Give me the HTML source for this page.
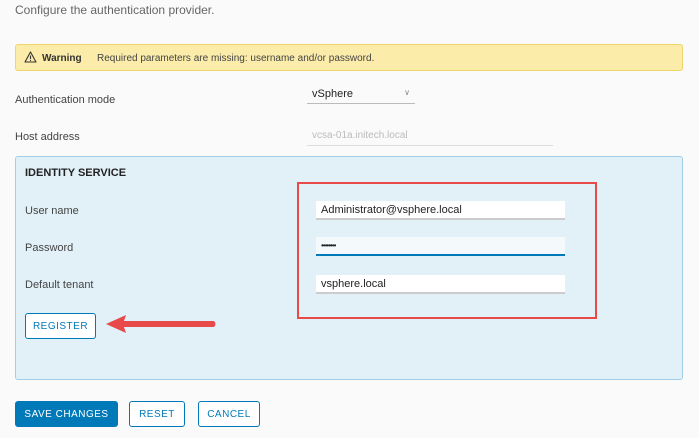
<!DOCTYPE html>
<html><head><style>
body{margin:0;width:699px;height:438px;background:#fafafa;font-family:"Liberation Sans",sans-serif;position:relative;overflow:hidden;color:#333}
.a{position:absolute}
.lbl{font-size:11px;color:#444}
.inp{position:absolute;background:#fff;border-bottom:2px solid #ccc;height:19px;font-size:11px;line-height:18px;padding-left:5px;box-sizing:border-box;color:#222}
.btn{position:absolute;box-sizing:border-box;border:1px solid #0079b8;border-radius:3px;font-size:10px;letter-spacing:.5px;color:#0079b8;background:#fff;text-align:center;line-height:25px;height:26px}
</style></head><body>
<div class="a" style="left:15px;top:3px;font-size:12px;color:#666">Configure the authentication provider.</div>
<div class="a" style="left:15px;top:44px;width:668px;height:27px;box-sizing:border-box;background:#fcecaa;border:1px solid #f0d56a;border-radius:3px"></div>
<svg class="a" style="left:24px;top:51px" width="13" height="12" viewBox="0 0 13 12"><path d="M6.5 1 L12 11 H1 Z" fill="none" stroke="#333" stroke-width="1.1" stroke-linejoin="round"/><path d="M6.5 4.5V8" stroke="#333" stroke-width="1.1"/><circle cx="6.5" cy="9.4" r=".6" fill="#333"/></svg>
<div class="a" style="left:42px;top:53px;font-size:10px;font-weight:bold;color:#333">Warning</div>
<div class="a" style="left:97px;top:53px;font-size:10px;color:#444">Required parameters are missing: username and/or password.</div>
<div class="a lbl" style="left:15px;top:94px">Authentication mode</div>
<div class="a" style="left:307px;top:88px;width:108px;height:16px;border-bottom:1px solid #bbb;font-size:11px;padding-left:5px;box-sizing:border-box;color:#222">vSphere<span style="position:absolute;right:5px;top:0;font-size:8px;color:#888">&#8744;</span></div>
<div class="a lbl" style="left:15px;top:131px">Host address</div>
<div class="a" style="left:307px;top:130px;width:246px;height:16px;border-bottom:1px solid #ddd;font-size:10px;padding-left:5px;box-sizing:border-box;color:#bbb">vcsa-01a.initech.local</div>
<div class="a" style="left:15px;top:156px;width:668px;height:224px;box-sizing:border-box;background:#e2f1f8;border:1px solid #9fd0e8;border-radius:3px"></div>
<div class="a" style="left:25px;top:167px;font-size:11px;font-weight:bold;color:#222">IDENTITY SERVICE</div>
<div class="a lbl" style="left:25px;top:205px">User name</div>
<div class="a lbl" style="left:25px;top:242px">Password</div>
<div class="a lbl" style="left:25px;top:279px">Default tenant</div>
<div class="inp" style="left:316px;top:201px;width:249px">Administrator@vsphere.local</div>
<div class="inp" style="left:316px;top:237px;width:249px;border-bottom-color:#0079b8;background:#f4f9fc;font-size:8px;letter-spacing:-1px">••••••••</div>
<div class="inp" style="left:316px;top:275px;width:249px">vsphere.local</div>
<div class="a" style="left:297px;top:182px;width:300px;height:137px;box-sizing:border-box;border:2px solid #e84a4a"></div>
<div class="btn" style="left:25px;top:313px;width:71px">REGISTER</div>
<svg class="a" style="left:102px;top:312px" width="116" height="26"><path d="M4 12 L24 3 L22 9 L112 9 Q115 12 112 15 L22 15 L24 21 Z" fill="#e84a4a"/></svg>
<div class="btn" style="left:15px;top:401px;width:103px;background:#0079b8;color:#fff">SAVE CHANGES</div>
<div class="btn" style="left:129px;top:401px;width:56px">RESET</div>
<div class="btn" style="left:198px;top:401px;width:62px">CANCEL</div>
</body></html>
